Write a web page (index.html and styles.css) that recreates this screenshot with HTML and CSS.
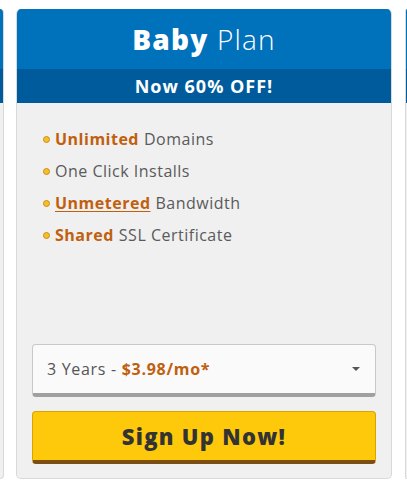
FILE: index.html
```html
<!DOCTYPE html>
<html>
<head>
<meta charset="utf-8">
<link rel="stylesheet" href="styles.css">
</head>
<body>
<div class="row">
  <div class="card side side-left"><div class="side-head"></div></div>
  <div class="card main">
    <div class="head">
      <h2 class="title"><b>Baby</b> Plan</h2>
    </div>
    <div class="band">Now 60% OFF!</div>
    <div class="body">
      <ul class="features">
        <li><span class="dot"></span><strong>Unlimited</strong> Domains</li>
        <li><span class="dot"></span>One Click Installs</li>
        <li><span class="dot"></span><strong class="u">Unmetered</strong> Bandwidth</li>
        <li><span class="dot"></span><strong>Shared</strong> SSL Certificate</li>
      </ul>
      <div class="spacer"></div>
      <div class="select">
        <span class="sel-text">3 Years -&nbsp;<strong>$3.98/mo*</strong></span>
        <span class="caret"></span>
      </div>
      <div class="btn">Sign Up Now!</div>
    </div>
  </div>
  <div class="card side side-right"><div class="side-head"></div></div>
</div>
</body>
</html>
```
FILE: styles.css
```css
* { box-sizing: border-box; }
html, body { margin: 0; padding: 0; background: #fff; }
body { font-family: "Open Sans", "Noto Sans", sans-serif; }
.row {
  display: flex;
  align-items: stretch;
  padding-top: 9px;
  height: 479px;
}
.card { border-radius: 5px; overflow: hidden; }
.side { width: 4px; flex: none; background: #f0f0f0; border: 1px solid #d9d9d9; border-top: none; }
.side-left { border-left: none; border-radius: 0 5px 5px 0; margin-right: 12px; width: 4px; }
.side-right { border-right: none; border-radius: 5px 0 0 5px; margin-left: 13px; width: 2px; }
.side-head { height: 94px; background: linear-gradient(#0071bb 0, #0071bb 60px, #005b9c 60px); }
.main {
  width: 376px;
  flex: none;
  display: flex;
  flex-direction: column;
  background: #f0f0f0;
  border: 1px solid #d9d9d9;
  border-top: none;
}
.head {
  height: 60px;
  background: #0071bb;
  display: flex;
  align-items: center;
  justify-content: center;
  margin: 0 -1px;
}
.title {
  margin: 0;
  color: #fff;
  font-size: 28px;
  font-weight: 300;
  letter-spacing: 1.2px;
  line-height: 1;
}
.title b { font-weight: 800; }
.band {
  height: 34px;
  background: #005b9c;
  color: #fff;
  font-weight: 700;
  font-size: 18px;
  display: flex;
  align-items: center;
  justify-content: center;
  margin: 0 -1px;
  letter-spacing: 1px;
}
.body {
  flex: 1;
  display: flex;
  flex-direction: column;
  padding: 20px 15px 14px 15px;
}
.features { list-style: none; margin: 0; padding: 0 0 0 11px; }
.features li {
  height: 32px;
  display: flex;
  align-items: center;
  font-size: 16px;
  color: #5a5a5a;
  letter-spacing: 0.5px;
}
.features strong { color: #c0600f; font-weight: 700; margin-right: 5px; }
.features strong.u { text-decoration: underline; text-underline-offset: 2px; }
.dot {
  width: 7px; height: 7px;
  border-radius: 50%;
  background: #f5c02a;
  border: 1px solid #cf8b10;
  margin-right: 5px;
  flex: none;
}
.spacer { flex: 1; }
.select {
  height: 53px;
  background: #fafafa;
  border: 1px solid #c8c8c8;
  border-bottom: 4px solid #a0a0a0;
  border-radius: 4px;
  display: flex;
  align-items: center;
  justify-content: space-between;
  padding: 0 15px 0 14px;
  font-size: 16px;
  color: #555;
  letter-spacing: 0.7px;
}
.select strong { color: #c0600f; font-weight: 700; }
.caret {
  width: 0; height: 0;
  border-left: 4px solid transparent;
  border-right: 4px solid transparent;
  border-top: 4px solid #555;
}
.btn {
  margin-top: 14px;
  height: 53px;
  background: #ffc90b;
  border: 1px solid #d9a300;
  border-bottom: 4px solid #7b4f12;
  border-radius: 4px;
  display: flex;
  align-items: center;
  justify-content: center;
  font-size: 22px;
  font-weight: 800;
  color: #333;
  letter-spacing: 1.3px;
}
```
